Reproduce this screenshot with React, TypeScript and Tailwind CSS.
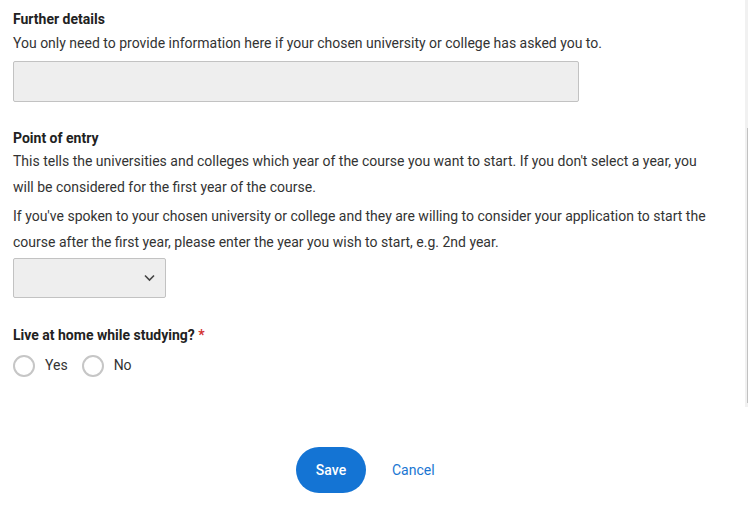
import { useState } from "react";

function Radio({ label, checked, onChange }: { label: string; checked: boolean; onChange: () => void }) {
  return (
    <label className="flex items-center gap-[10px] cursor-pointer">
      <span
        onClick={onChange}
        className="w-[22px] h-[22px] rounded-full border-2 border-[#c6c6c6] bg-white flex items-center justify-center"
      >
        {checked && <span className="w-[10px] h-[10px] rounded-full bg-[#1474d4]" />}
      </span>
      <span className="text-sm text-[#333333] -mt-[3px]">{label}</span>
    </label>
  );
}

export default function App() {
  const [home, setHome] = useState<string | null>(null);

  return (
    <div className="flex w-[748px] h-[507px] bg-white overflow-hidden" style={{ fontFamily: "Roboto, 'Liberation Sans', sans-serif" }}>
      <div className="flex-1 pl-[13px] pr-[13px] pt-[9px]">
        <h3 className="text-sm font-bold leading-[20px] text-[#222222]">Further details</h3>
        <p className="mt-[1px] text-sm leading-[26px] text-[#333333]">
          You only need to provide information here if your chosen university or college has asked you to.
        </p>
        <textarea className="mt-[5px] block w-[566px] h-[41px] rounded-[2px] border border-[#c2c2c2] bg-[#eeeeee] resize-none outline-none" />

        <h3 className="mt-[26px] text-sm font-bold leading-[20px] text-[#222222]">Point of entry</h3>
        <div className="max-w-[700px]">
          <p className="text-sm leading-[26px] text-[#333333]">
            This tells the universities and colleges which year of the course you want to start. If you don't select a year, you will be considered for the first year of the course.
          </p>
          <p className="mt-[3px] text-sm leading-[26px] text-[#333333]">
            If you've spoken to your chosen university or college and they are willing to consider your application to start the course after the first year, please enter the year you wish to start, e.g. 2nd year.
          </p>
        </div>
        <div className="mt-[3px] relative w-[153px] h-[40px] rounded-[2px] border border-[#c2c2c2] bg-[#eeeeee]">
          <svg className="absolute right-[10px] top-[15px]" width="11" height="8" viewBox="0 0 11 8" fill="none">
            <path d="M1 1.5L5.5 6L10 1.5" stroke="#444444" strokeWidth="1.6" />
          </svg>
        </div>

        <h3 className="mt-[27px] text-sm font-bold leading-[20px] text-[#222222]">
          Live at home while studying? <span className="text-[#d32f2f]">*</span>
        </h3>
        <div className="mt-[10px] flex items-center gap-[14px]">
          <Radio label="Yes" checked={home === "yes"} onChange={() => setHome("yes")} />
          <Radio label="No" checked={home === "no"} onChange={() => setHome("no")} />
        </div>

        <div className="mt-[70px] flex items-center gap-[26px] pl-[283px]">
          <button className="w-[70px] h-[46px] rounded-full bg-[#1474d4] text-white text-sm font-medium">Save</button>
          <button className="text-sm text-[#1976d2]">Cancel</button>
        </div>
      </div>
      <div className="w-[3px] h-[407px] bg-[#f1f1f1] flex justify-end">
        <div className="w-[1px] h-[275px] mt-[128px] bg-[#c1c1c1]" />
      </div>
    </div>
  );
}
